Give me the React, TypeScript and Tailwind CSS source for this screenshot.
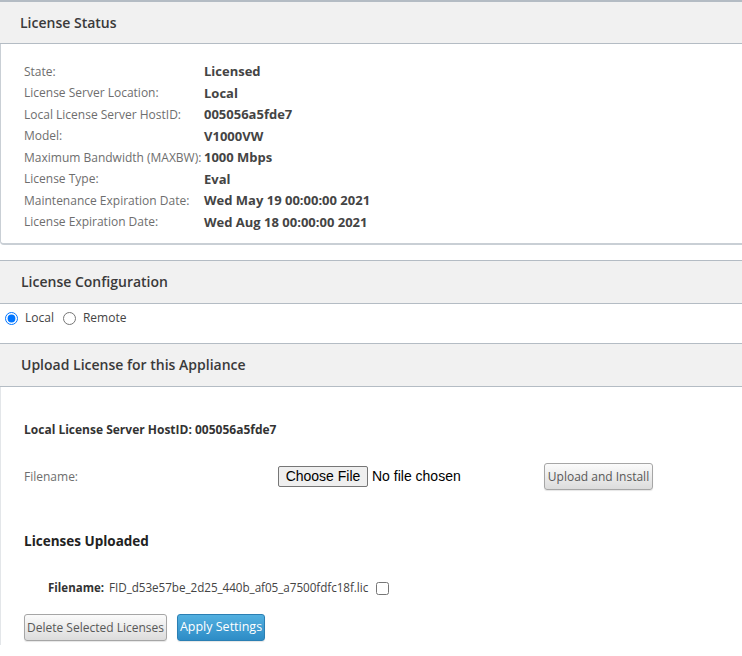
import React from "react";

const rows: [string, string][] = [
  ["State:", "Licensed"],
  ["License Server Location:", "Local"],
  ["Local License Server HostID:", "005056a5fde7"],
  ["Model:", "V1000VW"],
  ["Maximum Bandwidth (MAXBW):", "1000 Mbps"],
  ["License Type:", "Eval"],
  ["Maintenance Expiration Date:", "Wed May 19 00:00:00 2021"],
  ["License Expiration Date:", "Wed Aug 18 00:00:00 2021"],
];

function Header({ title }: { title: string }) {
  return (
    <div className="h-[44px] bg-[#f1f1f1] border-y border-[#b4bcc4] flex items-center pl-[21px] pb-[2px]">
      <span className="text-[14px] font-semibold text-[#3a3a3a]">{title}</span>
    </div>
  );
}

export default function App() {
  return (
    <div className="w-[742px] h-[656px] bg-white overflow-hidden font-['Open_Sans',sans-serif] text-[#333]">
      {/* License Status panel */}
      <div className="border-b-2 border-l border-[#c9cfd5] rounded-bl-[4px]">
        <div className="h-[44px] bg-[#f1f1f1] border-t-2 border-b border-[#b4bcc4] flex items-center pl-[20px] -ml-px">
          <span className="text-[14px] font-semibold text-[#3a3a3a]">License Status</span>
        </div>
        <div className="pt-[17px] pb-[10px] pl-[23px]">
          {rows.map(([k, v]) => (
            <div key={k} className="flex h-[21.5px] items-center">
              <span className="w-[180px] text-[12px] text-[#6e6e6e] whitespace-nowrap">{k}</span>
              <span className="text-[13px] font-bold text-[#444] whitespace-nowrap">{v}</span>
            </div>
          ))}
        </div>
      </div>

      <div className="h-[15px]" />

      <Header title="License Configuration" />
      <div className="h-[39px] flex items-start pt-[6px] pl-[5px] text-[12px] text-[#444]">
        <div className="flex items-center h-[16px]">
          <input type="radio" name="loc" defaultChecked className="m-0 w-[13px] h-[13px] accent-[#0075ff]" />
          <span className="ml-[7px]">Local</span>
          <input type="radio" name="loc" className="m-0 ml-[9px] w-[13px] h-[13px]" />
          <span className="ml-[7px]">Remote</span>
        </div>
      </div>
      <Header title="Upload License for this Appliance" />

      <div className="border-l border-[#e3e6e9] h-[258px] pl-[23px]">
        <div className="pt-[35px] text-[12px] font-bold text-[#333] leading-[16px]">
          Local License Server HostID: 005056a5fde7
        </div>
        <div className="flex items-center mt-[25px] h-[27px]">
          <span className="w-[254px] text-[12px] text-[#6e6e6e]">Filename:</span>
          <span className="h-[21px] w-[90px] justify-center border border-[#767676] rounded-[2px] bg-[#efefef] text-[14px] font-['Liberation_Sans',Arial,sans-serif] text-black flex items-center">
            Choose File
          </span>
          <span className="ml-[4px] w-[172px] text-[14px] font-['Liberation_Sans',Arial,sans-serif] text-black">No file chosen</span>
          <button className="h-[27px] w-[109px] border border-[#a6a6a6] rounded-[3px] bg-gradient-to-b from-[#fbfbfb] to-[#dcdcdc] text-[12px] text-[#585858] shadow-[0_1px_1px_rgba(0,0,0,0.1)]">
            Upload and Install
          </button>
        </div>
        <div className="mt-[41px] text-[13.5px] font-bold text-[#222] leading-[20px]">Licenses Uploaded</div>
        <div className="flex items-center mt-[29px] pl-[24px] h-[16px]">
          <span className="text-[11.5px] font-bold text-[#333]">Filename:</span>
          <span className="ml-[5px] text-[11.7px] text-[#444] tracking-[-0.05px]">FID_d53e57be_2d25_440b_af05_a7500fdfc18f.lic</span>
          <input type="checkbox" className="ml-[8px] m-0 w-[13px] h-[13px]" />
        </div>
        <div className="flex mt-[18px] gap-[10px]">
          <button className="h-[27px] w-[143px] border border-[#a6a6a6] rounded-[3px] bg-gradient-to-b from-[#fbfbfb] to-[#dcdcdc] text-[12px] text-[#585858] shadow-[0_1px_1px_rgba(0,0,0,0.1)]">
            Delete Selected Licenses
          </button>
          <button className="h-[27px] w-[88px] border border-[#2b7fb3] rounded-[3px] bg-gradient-to-b from-[#52b0e0] to-[#2d8cc6] text-[12.5px] text-white shadow-[0_1px_1px_rgba(0,0,0,0.1)]">
            Apply Settings
          </button>
        </div>
      </div>
    </div>
  );
}
